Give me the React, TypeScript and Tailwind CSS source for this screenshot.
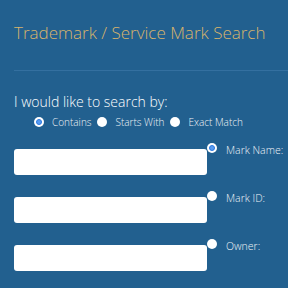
import React from "react";

type Opt = { label: string; checked?: boolean };

function Dot({ checked }: { checked?: boolean }) {
  return (
    <span className="flex h-[10px] w-[10px] shrink-0 items-center justify-center rounded-full bg-white">
      {checked && <span className="h-[6px] w-[6px] rounded-full border-[1.5px] border-[#2a78e0] bg-[#5a9cf0]" />}
    </span>
  );
}

const matchOpts: Opt[] = [
  { label: "Contains", checked: true },
  { label: "Starts With" },
  { label: "Exact Match" },
];

const fields: Opt[] = [
  { label: "Mark Name:", checked: true },
  { label: "Mark ID:" },
  { label: "Owner:" },
];

export default function App() {
  return (
    <div className="h-[288px] w-full overflow-hidden bg-[#22608f] font-['Open_Sans',sans-serif] font-light">
      <h1 className="pl-[14px] pt-[21px] text-[17px] leading-[24px] text-[#d8b46c]">
        Trademark / Service Mark Search
      </h1>
      <div className="ml-[14px] mt-[25px] border-t border-[#3470a0]" />

      <p className="mt-[21px] pl-[14px] text-[14px] leading-[19px] text-white">
        I would like to search by:
      </p>
      <div className="mt-[4px] flex items-center pl-[34px] text-[10px] leading-[14px] text-[#eef2f6]">
        {matchOpts.map((o) => (
          <label key={o.label} className="mr-[6px] flex items-center gap-[8px]">
            <Dot checked={o.checked} />
            <span>{o.label}</span>
          </label>
        ))}
      </div>

      <div className="mt-[20px] flex flex-col gap-[22px] pl-[14px]">
        {fields.map((f) => (
          <div key={f.label} className="flex items-start">
            <div className="h-[26px] w-[193px] shrink-0 rounded-[3px] bg-white" />
            <div className="-mt-[6px] flex shrink-0 items-start gap-[9px]">
              <Dot checked={f.checked} />
              <span className="whitespace-nowrap text-[10.5px] leading-[14px] text-[#eef2f6]">
                {f.label}
              </span>
            </div>
          </div>
        ))}
      </div>
    </div>
  );
}
